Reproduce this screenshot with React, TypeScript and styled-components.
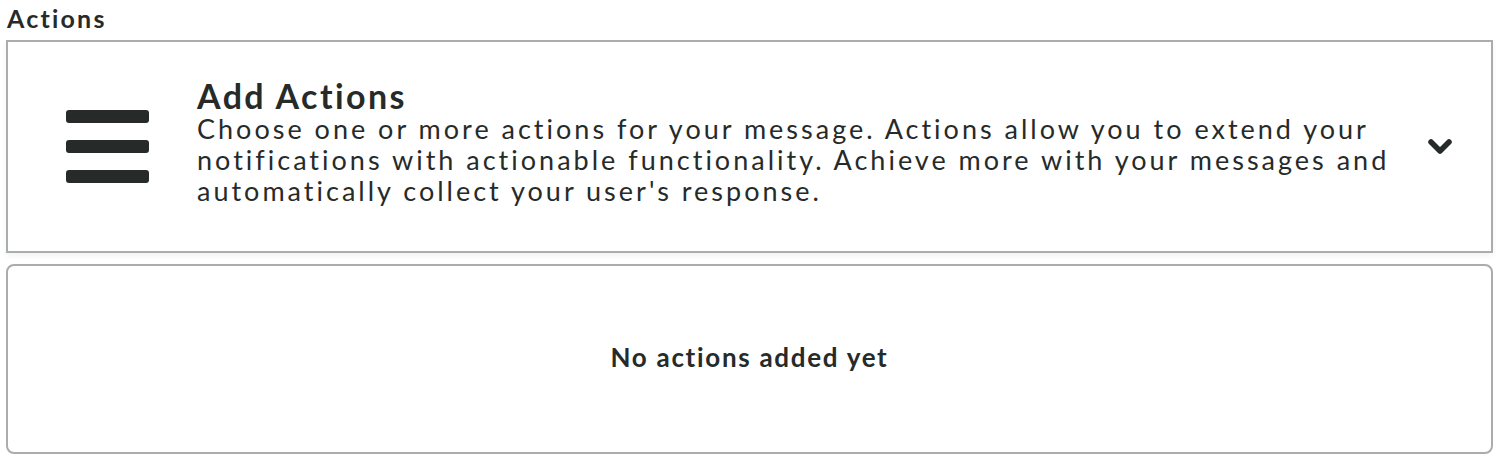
import React from "react";
import styled, { createGlobalStyle } from "styled-components";

const GlobalStyle = createGlobalStyle`
  body {
    margin: 0;
    background: #ffffff;
    font-family: Lato, "Noto Sans", sans-serif;
    color: #262b2a;
  }
`;

const Page = styled.div`
  padding: 4px 7px 0 6px;
  width: 1487px;
  display: flex;
  flex-direction: column;
`;

const Label = styled.div`
  font-size: 25px;
  font-weight: 700;
  letter-spacing: 2.2px;
  line-height: 28px;
  padding-left: 1px;
  margin-bottom: 8px;
`;

const Header = styled.div`
  box-sizing: border-box;
  height: 213px;
  border: 2px solid #a9adac;
  background: #fff;
  box-shadow: 0 3px 6px rgba(0, 0, 0, 0.05);
  display: flex;
  align-items: center;
  padding: 0 36px 0 58px;
`;

const Burger = styled.div`
  width: 83px;
  display: flex;
  flex-direction: column;
  gap: 17px;
  flex-shrink: 0;
  margin-right: 48px;
`;

const Bar = styled.span`
  display: block;
  height: 13px;
  border-radius: 3px;
  background: #262b2a;
`;

const Text = styled.div`
  width: 1200px;
  flex-shrink: 0;
  margin-top: -8px;
`;

const Title = styled.div`
  font-size: 34px;
  font-weight: 700;
  letter-spacing: 2.4px;
  line-height: 34px;
`;

const Desc = styled.div`
  font-size: 27px;
  letter-spacing: 3px;
  line-height: 31px;
`;

const Toggle = styled.div`
  flex: 1;
  display: flex;
  justify-content: flex-end;
  padding-right: 2px;
`;

const Empty = styled.div`
  box-sizing: border-box;
  margin-top: 11px;
  height: 190px;
  border: 2px solid #a9adac;
  border-radius: 8px;
  display: flex;
  align-items: center;
  justify-content: center;
  font-size: 26px;
  font-weight: 700;
  letter-spacing: 1.7px;
  padding-bottom: 4px;
`;

export default function App() {
  return (
    <Page>
      <GlobalStyle />
      <Label>Actions</Label>
      <Header>
        <Burger>
          <Bar />
          <Bar />
          <Bar />
        </Burger>
        <Text>
          <Title>Add Actions</Title>
          <Desc>
            Choose one or more actions for your message. Actions allow you to
            extend your notifications with actionable functionality. Achieve
            more with your messages and automatically collect your user's
            response.
          </Desc>
        </Text>
        <Toggle>
          <svg width="26" height="18" viewBox="0 0 26 18">
            <polyline
              points="4,4 13,13 22,4"
              fill="none"
              stroke="#262b2a"
              strokeWidth="5.5"
              strokeLinecap="round"
              strokeLinejoin="round"
            />
          </svg>
        </Toggle>
      </Header>
      <Empty>No actions added yet</Empty>
    </Page>
  );
}
